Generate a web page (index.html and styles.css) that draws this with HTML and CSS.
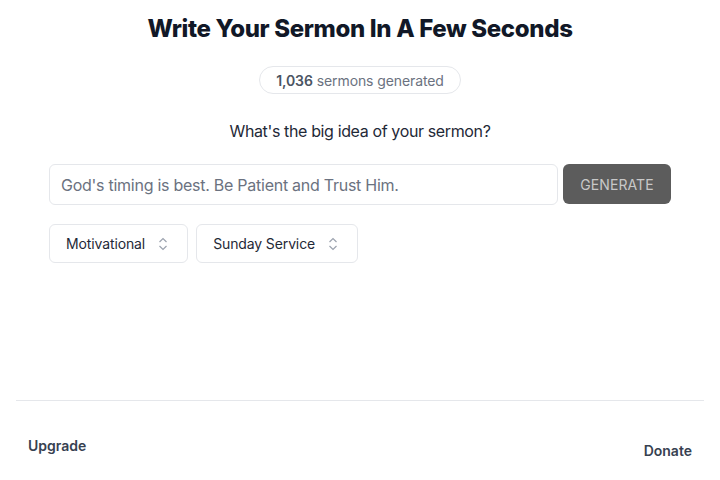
FILE: index.html
```html
<!DOCTYPE html>
<html lang="en">
<head>
    <meta charset="UTF-8">
    <title>Sermon Writer</title>
    <link rel="stylesheet" href="styles.css">
</head>
<body>
<main class="main">
    <h1 class="title">Write Your Sermon In A Few Seconds</h1>
    <div class="counter"><b>1,036</b> sermons generated</div>
    <p class="question">What's the big idea of your sermon?</p>

    <div class="form-row">
        <input class="idea" type="text" placeholder="God's timing is best. Be Patient and Trust Him.">
        <button class="generate">GENERATE</button>
    </div>

    <div class="select-row">
        <div class="select">
            <span>Motivational</span>
            <svg width="12" height="16" viewBox="0 0 12 16" fill="none" stroke="#9ca3af" stroke-width="1.2"><path d="M2.5 6 6 2.5 9.5 6M2.5 10 6 13.5 9.5 10"/></svg>
        </div>
        <div class="select">
            <span>Sunday Service</span>
            <svg width="12" height="16" viewBox="0 0 12 16" fill="none" stroke="#9ca3af" stroke-width="1.2"><path d="M2.5 6 6 2.5 9.5 6M2.5 10 6 13.5 9.5 10"/></svg>
        </div>
    </div>
</main>

<footer class="footer">
    <a class="upgrade" href="#">Upgrade</a>
    <a class="donate" href="#">Donate</a>
</footer>
</body>
</html>
```

FILE: styles.css
```css
body { margin: 0; font-family: Inter, "Liberation Sans", sans-serif; color: #1f2937; background: #fff; }
.main { width: 622px; margin: 0 auto; display: flex; flex-direction: column; align-items: center; }
.title { margin: 13px 0 0; font-size: 24px; font-weight: 800; color: #111827; letter-spacing: -0.35px; line-height: 32px; }
.counter { margin-top: 21px; height: 28px; padding: 0 16px; border: 1px solid #e5e7eb; border-radius: 999px; display: flex; align-items: center; font-size: 14px; color: #6b7280; box-sizing: border-box; letter-spacing: -0.1px; }
.counter b { font-weight: 600; color: #4b5563; margin-right: 4px; }
.question { margin: 25px 0 0; font-size: 16px; line-height: 24px; color: #1f2937; letter-spacing: -0.37px; }
.form-row { margin-top: 21px; width: 100%; display: flex; gap: 5px; }
.idea { flex: 1; height: 41px; box-sizing: border-box; border: 1px solid #e5e7eb; border-radius: 6px; padding: 0 11px; font-family: inherit; font-size: 16px; letter-spacing: -0.26px; }
.idea::placeholder { color: #6b7280; }
.generate { width: 108px; height: 40px; border: none; border-radius: 6px; background: #5c5c5c; color: #c8c8c8; font-family: inherit; font-size: 14px; letter-spacing: 0.1px; }
.select-row { margin-top: 19px; width: 100%; display: flex; gap: 8px; }
.select { height: 39px; box-sizing: border-box; border: 1px solid #e5e7eb; border-radius: 6px; padding: 0 18px 0 16px; display: flex; align-items: center; gap: 12px; font-size: 14px; color: #1f2937; letter-spacing: -0.12px; }
.footer { margin: 137px 16px 0; border-top: 1px solid #e5e7eb; height: 80px; display: flex; justify-content: space-between; padding: 0 12px; }
.footer a { font-size: 14px; font-weight: 600; color: #374151; text-decoration: none; }
.upgrade { margin-top: 36px; }
.donate { margin-top: 41px; }
```
